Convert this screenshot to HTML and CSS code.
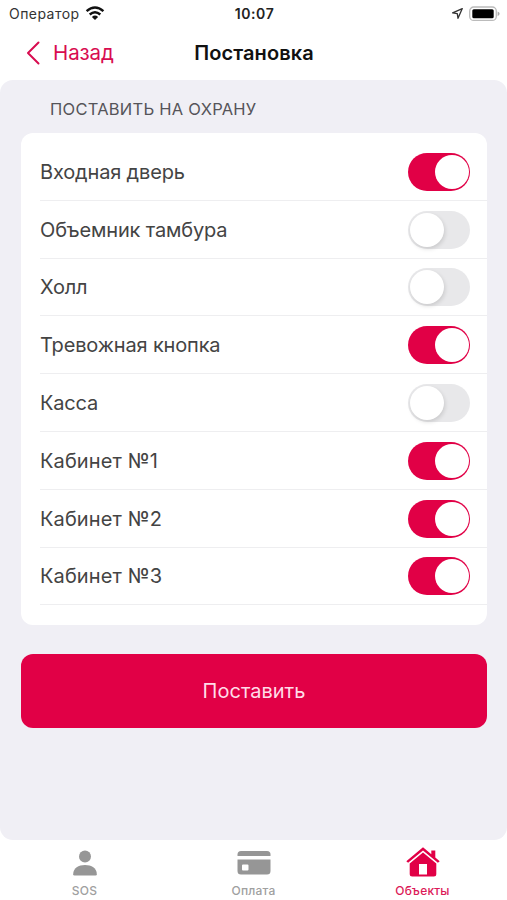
FILE: index.html
```html
<!DOCTYPE html>
<html lang="ru">
<head>
<meta charset="utf-8">
<title>Постановка</title>
<link rel="stylesheet" href="styles.css">
</head>
<body>
<div class="screen">
  <div class="status">
    <div class="carrier"><span>Оператор</span>
      <svg width="20" height="16" viewBox="0 0 20 16"><g fill="none" stroke="#111" stroke-width="2.4"><path d="M1.6 6.2Q10 -1.4 18.4 6.2"/><path d="M4.7 9.5Q10 4.8 15.3 9.5"/></g><path d="M6.9 11.9Q10 9.2 13.1 11.9L10 15z" fill="#111"/></svg>
    </div>
    <time class="clock">10:07</time>
    <div class="indicators">
      <svg width="13" height="13" viewBox="0 0 13 13"><path d="M1.6 5.9L11.3 1.6L7 11.3L6.3 6.7Z" fill="none" stroke="#333" stroke-width="1.3" stroke-linejoin="round"/></svg>
      <svg width="31" height="16" viewBox="0 0 31 16"><rect x=".7" y="1" width="26.600" height="13.400" rx="4" fill="#fff" stroke="#bbb" stroke-width="1.300"/><rect x="3.300" y="3.300" width="21.400" height="9" rx="1.500"/><path d="M28.600 5.400Q30.600 6.300 30.600 7.800T28.600 10.200z" fill="#aaa"/></svg>
    </div>
  </div>
  <header class="nav">
    <a class="back"><svg width="14" height="24" viewBox="0 0 14 24"><path d="M12.500 1.500L2 12L12.500 22.500" fill="none" stroke="#d80c50" stroke-width="2" stroke-linecap="round" stroke-linejoin="round"/></svg><span>Назад</span></a>
    <h1>Постановка</h1>
  </header>
  <main class="content">
    <h2>ПОСТАВИТЬ НА ОХРАНУ</h2>
    <ul class="zones">
      <li><span>Входная дверь</span><i class="switch on"></i></li>
      <li><span>Объемник тамбура</span><i class="switch"></i></li>
      <li><span>Холл</span><i class="switch"></i></li>
      <li><span>Тревожная кнопка</span><i class="switch on"></i></li>
      <li><span>Касса</span><i class="switch"></i></li>
      <li><span class="room">Кабинет №1</span><i class="switch on"></i></li>
      <li><span class="room">Кабинет №2</span><i class="switch on"></i></li>
      <li><span class="room">Кабинет №3</span><i class="switch on"></i></li>
    </ul>
    <button class="submit">Поставить</button>
  </main>
  <nav class="tabs">
    <a><svg width="34" height="32" viewBox="0 0 34 32"><g fill="#969696"><circle cx="17" cy="9.600" r="6"/><path d="M5.200 27.200C5.200 21 10.500 18 17 18s11.800 3 11.800 9.200q0 1.300-1.300 1.300h-21q-1.300 0-1.300-1.300z"/></g></svg><span>SOS</span></a>
    <a><svg width="34" height="32" viewBox="0 0 34 32"><g fill="#969696"><path d="M.5 9V7.500Q.5 4 4 4h26q3.500 0 3.500 3.500V9z"/><path fill-rule="evenodd" d="M.5 12.500h33V24q0 3.500-3.500 3.500H4Q.5 27.500.5 24zM6 17.500q-1 0-1 1v4q0 1 1 1h4.500q1 0 1-1v-4q0-1-1-1z"/></g></svg><span>Оплата</span></a>
    <a class="active"><svg width="34" height="32" viewBox="0 0 34 32"><g fill="#e10046"><path d="M17 .3L.3 14.200l1.800 1.600L17 3.500l14.900 12.300 1.800-1.600-4.400-3.700V3.500h-4v3.700z"/><path fill-rule="evenodd" d="M17 5.500L3.700 16.500V27q0 2.500 2.500 2.500h21.600q2.500 0 2.500-2.500V16.500zM13 17h8v10.500h-8z"/></g></svg><span>Объекты</span></a>
  </nav>
</div>
</body>
</html>
```
FILE: styles.css
```css
* { box-sizing: border-box; }
body { margin: 0; background: #fff; font-family: Inter, "Liberation Sans", sans-serif; }
h1, h2, ul { margin: 0; padding: 0; }
.screen { width: 507px; height: 900px; display: flex; flex-direction: column; overflow: hidden; }
.status { height: 27px; display: grid; grid-template-columns: 1fr auto 1fr; align-items: center; padding: 0 7px 0 9px; }
.carrier { display: flex; align-items: center; gap: 5px; font-size: 14px; letter-spacing: .45px; color: #333; }
.carrier svg { margin-top: -2px; }
.clock { font-size: 14px; font-weight: 600; letter-spacing: .6px; color: #222; }
.indicators { display: flex; align-items: center; justify-content: flex-end; gap: 5px; }
.nav { height: 53px; display: grid; grid-template-columns: 1fr auto 1fr; align-items: center; padding: 0 25px 2px 26px; }
.back { display: flex; align-items: center; gap: 13px; font-size: 20.5px; letter-spacing: -.1px; color: #d80c50; }
.nav h1 { font-size: 20px; font-weight: 600; letter-spacing: .1px; color: #111; }
.content { height: 760px; background: #f0eff5; border-radius: 13px; padding: 0 20px 0 21px; }
.content h2 { height: 53px; line-height: 58px; padding-left: 29px; font-size: 16.5px; font-weight: 400; letter-spacing: .25px; color: #555459; }
.zones { height: 492px; list-style: none; background: #fff; border-radius: 12px; padding: 10px 0 0 19px; }
.zones li { height: 57.8px; display: flex; align-items: center; justify-content: space-between; padding: 1px 17px 0 0; border-bottom: 1.5px solid #eeeef0; font-size: 20px; letter-spacing: -.16px; color: #444; }
.zones .room { letter-spacing: .12px; }
.switch { width: 62px; height: 38px; border-radius: 19px; background: #e8e8ea; padding: 2px; }
.switch::before { content: ""; display: block; width: 34px; height: 34px; border-radius: 50%; background: #fff; box-shadow: 1px 2px 4px #0002; }
.switch.on { background: #e10046; }
.switch.on::before { margin-left: 24.5px; box-shadow: none; }
.submit { display: block; width: 100%; height: 74px; margin-top: 29px; padding: 0; border: 0; border-radius: 12px; background: #e10046; color: #ffdce8; font: 20px Inter, "Liberation Sans", sans-serif; }
.tabs { height: 60px; display: grid; grid-template-columns: repeat(3, 1fr); padding-top: 7px; }
.tabs a { display: flex; flex-direction: column; align-items: center; font-size: 12px; font-weight: 500; line-height: 14px; letter-spacing: .2px; color: #a0a0a0; }
.tabs span { margin-top: 5px; }
.tabs .active { color: #dc1a58; }
```
